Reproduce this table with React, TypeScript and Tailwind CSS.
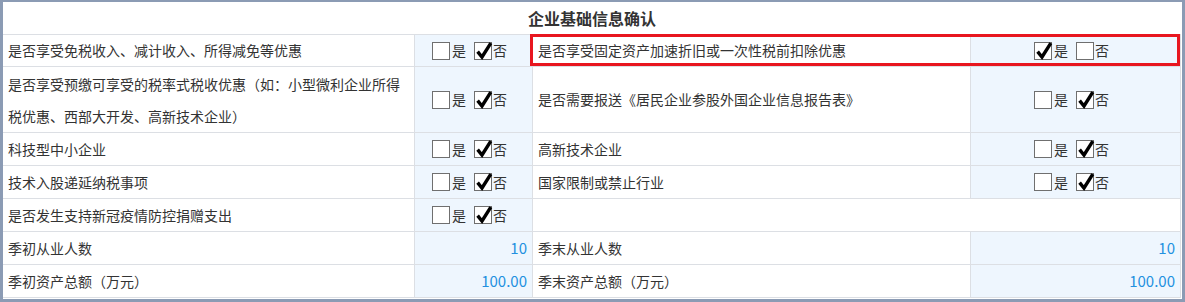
const font = { fontFamily: '"Noto Sans CJK SC", "Noto Sans", sans-serif' };

function Box({ checked }: { checked: boolean }) {
  return (
    <span className="relative inline-block h-[18px] w-[18px] border border-[#6f6f6f] bg-white">
      {checked && (
        <svg className="absolute -top-[2px] left-0" width="18" height="19" viewBox="0 0 18 19">
          <path d="M2.6 10.6 L7 16 L15.8 2.2" fill="none" stroke="#000" strokeWidth="3.4" strokeLinejoin="miter" />
        </svg>
      )}
    </span>
  );
}

function YesNo({ yes }: { yes: boolean }) {
  return (
    <div className="flex items-center text-[14px] text-[#333]">
      <Box checked={yes} />
      <span className="ml-[2px] mr-[8px]">是</span>
      <Box checked={!yes} />
      <span className="ml-[1px]">否</span>
    </div>
  );
}

const line = "border-[#dcdfe4]";

function Row({
  left,
  leftCheck,
  right,
  rightCheck,
  h = "h-[33px]",
  children,
}: {
  left: React.ReactNode;
  leftCheck: React.ReactNode;
  right?: React.ReactNode;
  rightCheck?: React.ReactNode;
  h?: string;
  children?: React.ReactNode;
}) {
  return (
    <div className={`relative flex ${h} border-b ${line}`}>
      <div className={`flex w-[412px] items-center border-r ${line} pl-[5px]`}>{left}</div>
      <div className={`flex w-[118px] items-center border-r ${line} bg-[#eef6fe]`}>{leftCheck}</div>
      {right === undefined ? (
        <div className={`flex-1 border-r ${line}`} />
      ) : (
        <>
          <div className={`flex w-[438px] items-center border-r ${line} pl-[5px]`}>{right}</div>
          <div className={`flex flex-1 items-center border-r ${line} bg-[#eef6fe]`}>{rightCheck}</div>
        </>
      )}
      {children}
    </div>
  );
}

const center = (yes: boolean) => (
  <div className="flex w-full justify-center pr-[8px]">
    <YesNo yes={yes} />
  </div>
);

const num = (v: string) => (
  <div className="w-full pr-[5px] text-right text-[15px] text-[#2290e0]">{v}</div>
);

export default function App() {
  return (
    <div
      className="h-[302px] w-[1185px] border-b-[3px] border-l-[3px] border-r-[3px] border-t-2 border-[#8b9bb4] bg-white text-[14px] text-[#333]"
      style={font}
    >
      <div className={`mr-px flex h-[33px] items-center justify-center border-b ${line}`}>
        <span className="text-[16px] font-bold text-[#333]">企业基础信息确认</span>
      </div>
      <div className="mr-px">
        <Row
          h="h-[32px]"
          left="是否享受免税收入、减计收入、所得减免等优惠"
          leftCheck={center(false)}
          right="是否享受固定资产加速折旧或一次性税前扣除优惠"
          rightCheck={center(true)}
        >
          <div className="pointer-events-none absolute -top-px left-[527px] h-[32px] w-[650px] border-[3px] border-[#e8161f]" />
        </Row>
        <Row
          h="h-[66px]"
          left={
            <div className="leading-[32px]">
              是否享受预缴可享受的税率式税收优惠（如：小型微利企业所得
              <br />
              税优惠、西部大开发、高新技术企业）
            </div>
          }
          leftCheck={center(false)}
          right="是否需要报送《居民企业参股外国企业信息报告表》"
          rightCheck={center(false)}
        />
        <Row left="科技型中小企业" leftCheck={center(false)} right="高新技术企业" rightCheck={center(false)} />
        <Row left="技术入股递延纳税事项" leftCheck={center(false)} right="国家限制或禁止行业" rightCheck={center(false)} />
        <Row left="是否发生支持新冠疫情防控捐赠支出" leftCheck={center(false)} />
        <Row left="季初从业人数" leftCheck={num("10")} right="季末从业人数" rightCheck={num("10")} />
        <Row
          left="季初资产总额（万元）"
          leftCheck={num("100.00")}
          right="季末资产总额（万元）"
          rightCheck={num("100.00")}
        />
      </div>
    </div>
  );
}
